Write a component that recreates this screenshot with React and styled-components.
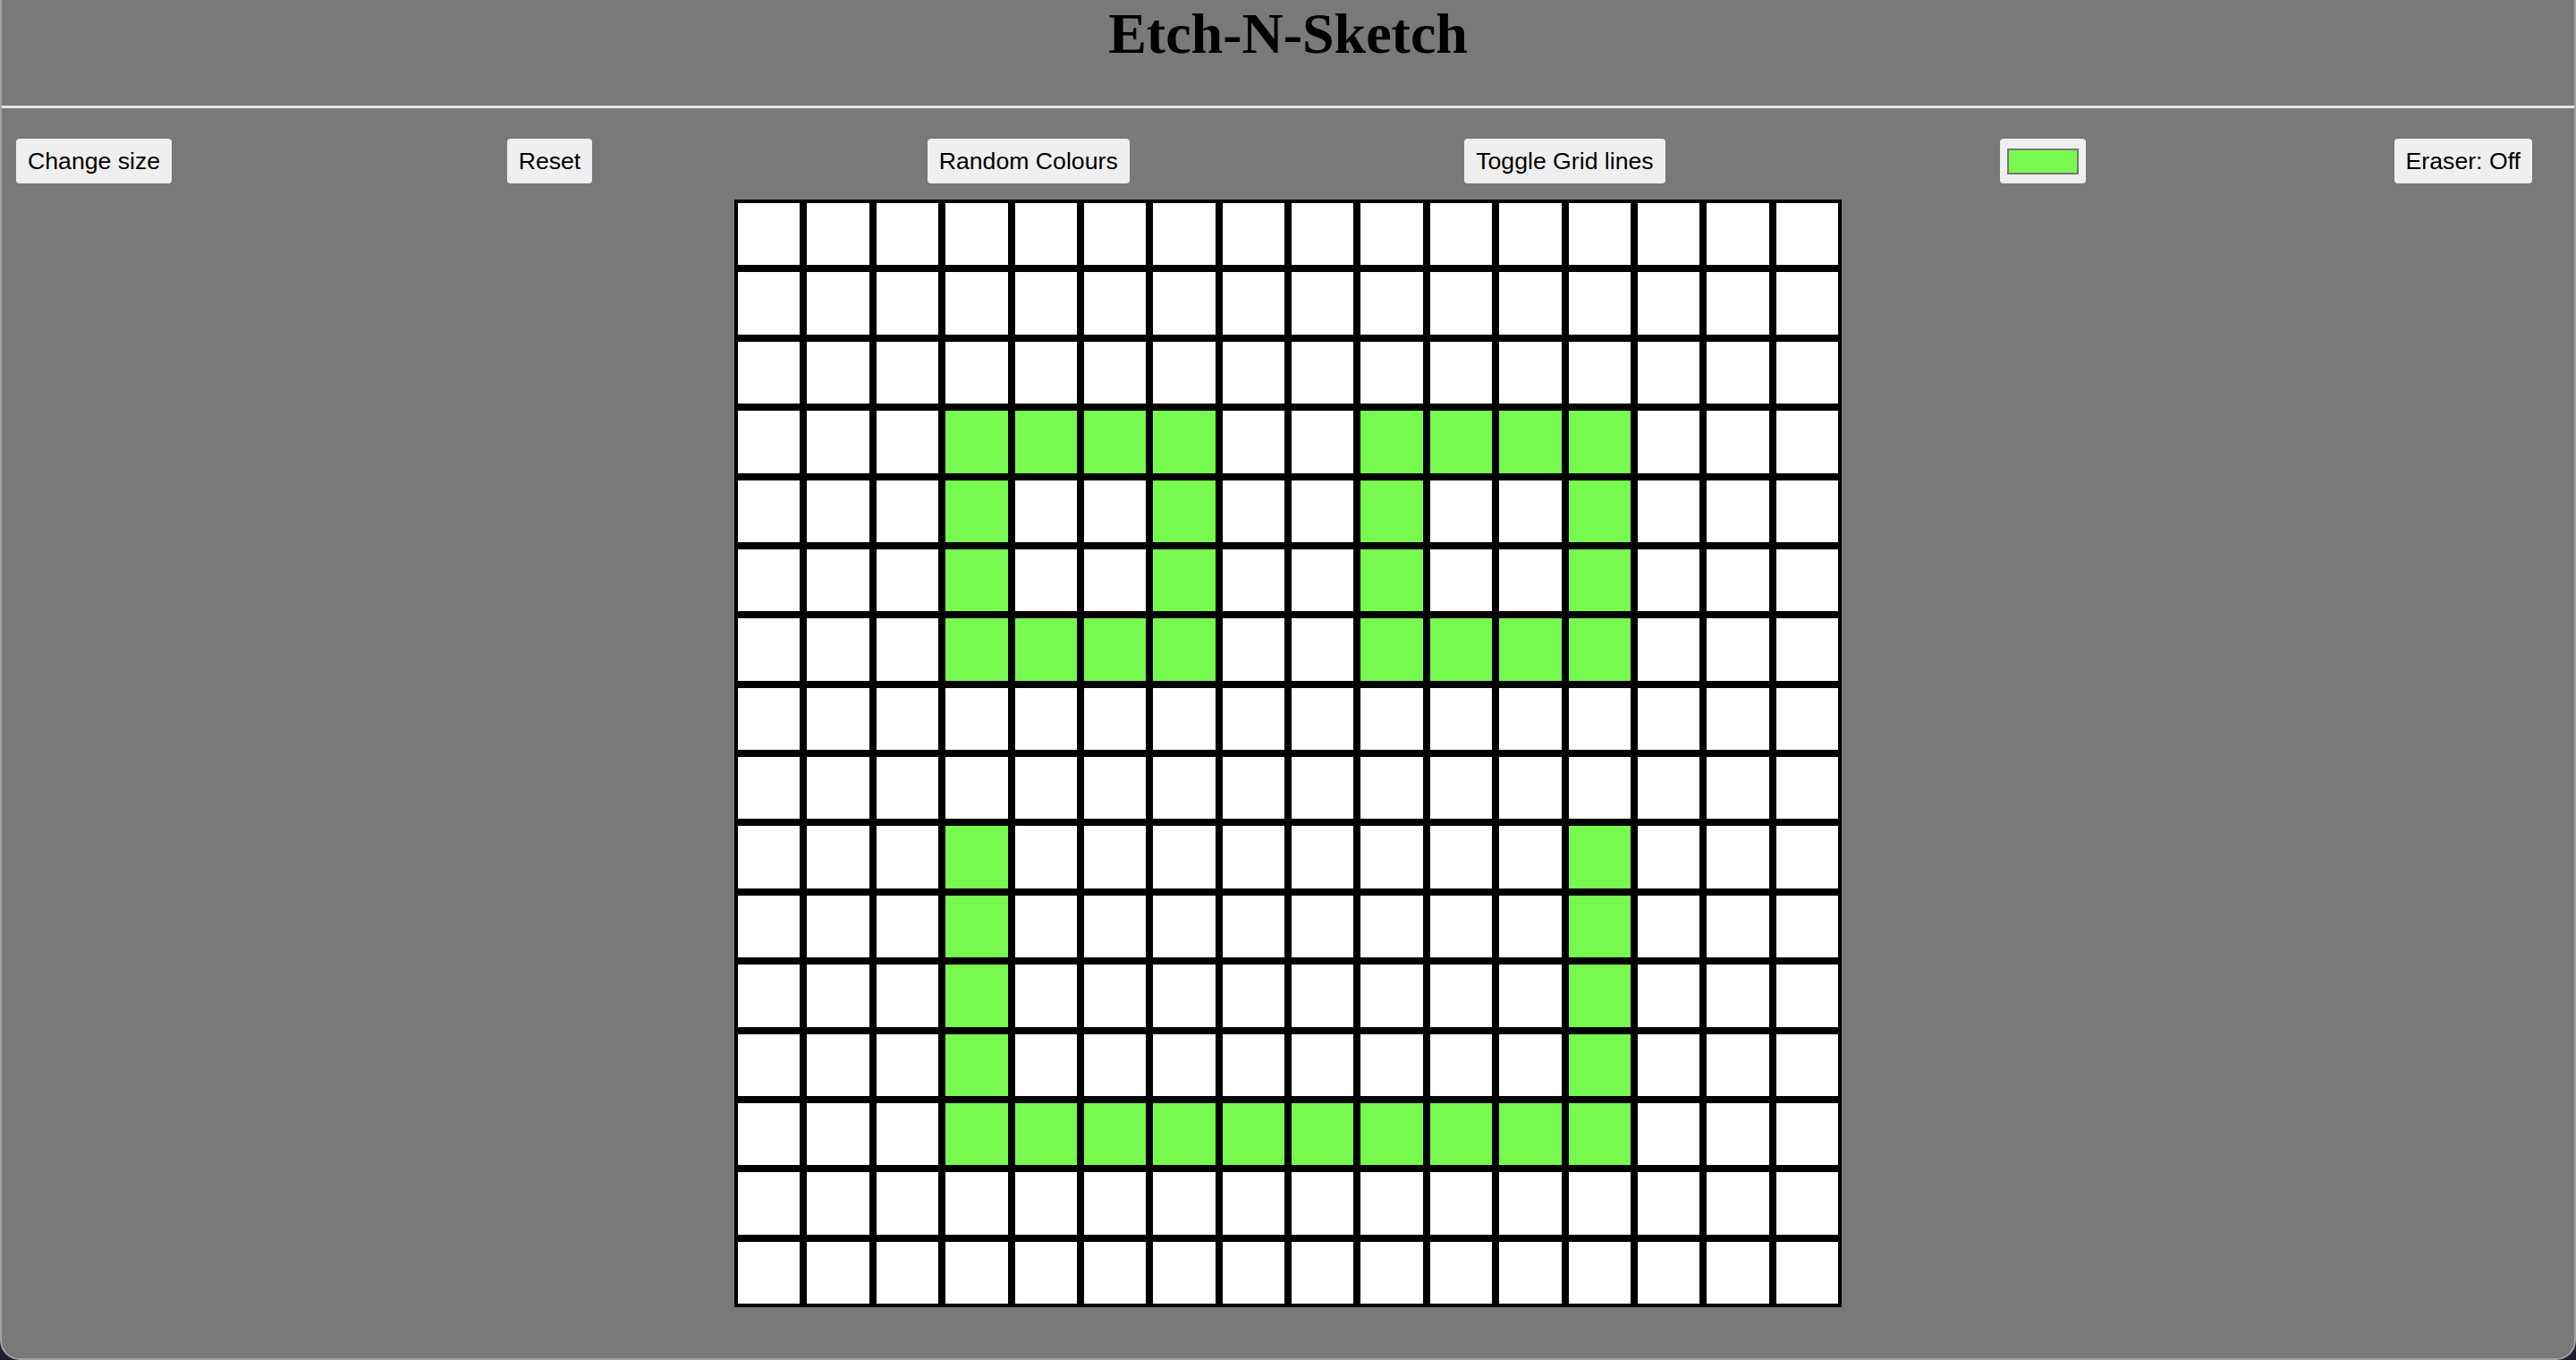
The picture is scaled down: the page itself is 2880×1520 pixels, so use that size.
import React from "react";
import styled, { createGlobalStyle } from "styled-components";

const GlobalStyle = createGlobalStyle`
  html, body {
    margin: 0;
    padding: 0;
    background: #1b1f2b;
  }
  * { box-sizing: border-box; }
`;

const Window = styled.div`
  width: 2880px;
  height: 1520px;
  background: #7a7879;
  border-left: 2px solid #a2a1a2;
  border-right: 2px solid #a2a1a2;
  border-bottom: 2px solid #a2a1a2;
  border-radius: 0 0 22px 22px;
  overflow: hidden;
  display: flex;
  flex-direction: column;
`;

const Header = styled.header`
  height: 121px;
  border-bottom: 3px solid #e6e6e6;
  display: flex;
  justify-content: center;
  align-items: flex-start;
`;

const Title = styled.h1`
  margin: 0;
  padding-top: 1px;
  font-family: "Liberation Serif", "Times New Roman", serif;
  font-weight: bold;
  font-size: 64px;
  line-height: 74px;
  color: #000;
`;

const Toolbar = styled.nav`
  margin-top: 34px;
  padding: 0 17px 0 16px;
  height: 50px;
  display: flex;
  justify-content: space-between;
  align-items: center;
`;

const Button = styled.button`
  height: 50px;
  padding: 0 13px;
  margin: ${(p) => (p.$last ? "0 30px 0 -30px" : "0")};
  border: none;
  border-radius: 4px;
  background: #efefef;
  color: #000;
  font-family: "Liberation Sans", Arial, sans-serif;
  font-size: 26.67px;
  line-height: 1;
  cursor: pointer;
`;

const ColorButton = styled.div`
  width: 96px;
  height: 50px;
  border-radius: 4px;
  background: #efefef;
  display: flex;
  align-items: center;
  justify-content: center;
`;

const Swatch = styled.span`
  display: block;
  width: 80px;
  height: 29px;
  border: 2px solid #767676;
  background: ${(p) => p.$color};
`;

const Board = styled.div`
  margin: 18px auto 0;
  width: 1238px;
  height: 1238px;
  display: grid;
  grid-template-columns: repeat(16, 1fr);
  grid-template-rows: repeat(16, 1fr);
`;

const Cell = styled.div`
  border: 4px solid #000;
  background: ${(p) => (p.$on ? "#77f94f" : "#ffffff")};
`;

const GREEN = "#77f94f";

function isOn(r, c) {
  if (r === 3 || r === 6) return (c >= 3 && c <= 6) || (c >= 9 && c <= 12);
  if (r === 4 || r === 5) return c === 3 || c === 6 || c === 9 || c === 12;
  if (r >= 9 && r <= 12) return c === 3 || c === 12;
  if (r === 13) return c >= 3 && c <= 12;
  return false;
}

export default function App() {
  const cells = [];
  for (let r = 0; r < 16; r++) {
    for (let c = 0; c < 16; c++) {
      cells.push(<Cell key={`${r}-${c}`} $on={isOn(r, c)} />);
    }
  }
  return (
    <>
      <GlobalStyle />
      <Window>
        <Header>
          <Title>Etch-N-Sketch</Title>
        </Header>
        <Toolbar>
          <Button>Change size</Button>
          <Button>Reset</Button>
          <Button>Random Colours</Button>
          <Button>Toggle Grid lines</Button>
          <ColorButton>
            <Swatch $color={GREEN} />
          </ColorButton>
          <Button $last>Eraser: Off</Button>
        </Toolbar>
        <Board>{cells}</Board>
      </Window>
    </>
  );
}
